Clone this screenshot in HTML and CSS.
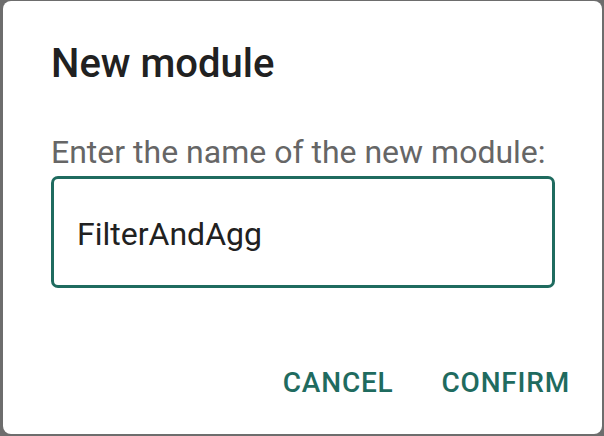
FILE: index.html
```html
<!DOCTYPE html>
<html>
<head>
<meta charset="utf-8">
<link rel="stylesheet" href="styles.css">
</head>
<body>
<div class="backdrop">
  <div class="dialog">
    <h2 class="title">New module</h2>
    <div class="content">
      <label class="label">Enter the name of the new module:</label>
      <div class="field">FilterAndAgg</div>
    </div>
    <div class="actions">
      <button class="btn">CANCEL</button>
      <button class="btn">CONFIRM</button>
    </div>
  </div>
</div>
</body>
</html>
```

FILE: styles.css
```css
html, body {
  margin: 0;
  padding: 0;
  width: 604px;
  height: 436px;
  overflow: hidden;
  background: #6d6d6d;
}
.backdrop {
  padding: 1px 2px 2px 3px;
  width: 604px;
  height: 436px;
  box-sizing: border-box;
}
.dialog {
  width: 599px;
  height: 433px;
  background: #ffffff;
  border-radius: 8px;
  display: flex;
  flex-direction: column;
  font-family: Roboto, "Noto Sans", sans-serif;
  box-sizing: border-box;
}
.title {
  margin: 39px 0 0 48px;
  font-size: 40px;
  line-height: 48px;
  font-weight: 500;
  color: #212121;
}
.content {
  margin: 44px 0 0 48px;
  display: flex;
  flex-direction: column;
}
.label {
  font-size: 32px;
  line-height: 40px;
  color: #666666;
}
.field {
  margin-top: 4px;
  width: 504px;
  box-sizing: border-box;
  border: 3px solid #1f6b5f;
  border-radius: 7px;
  padding: 35px 0 31px 23px;
  font-size: 32px;
  line-height: 40px;
  color: #212121;
}
.actions {
  margin-top: auto;
  padding: 16px;
  display: flex;
  justify-content: flex-end;
  gap: 16px;
}
.btn {
  border: none;
  background: transparent;
  height: 72px;
  padding: 0 16px;
  font-family: Roboto, "Noto Sans", sans-serif;
  font-size: 28px;
  font-weight: 500;
  letter-spacing: 0.8px;
  color: #1f6b5f;
}
```
